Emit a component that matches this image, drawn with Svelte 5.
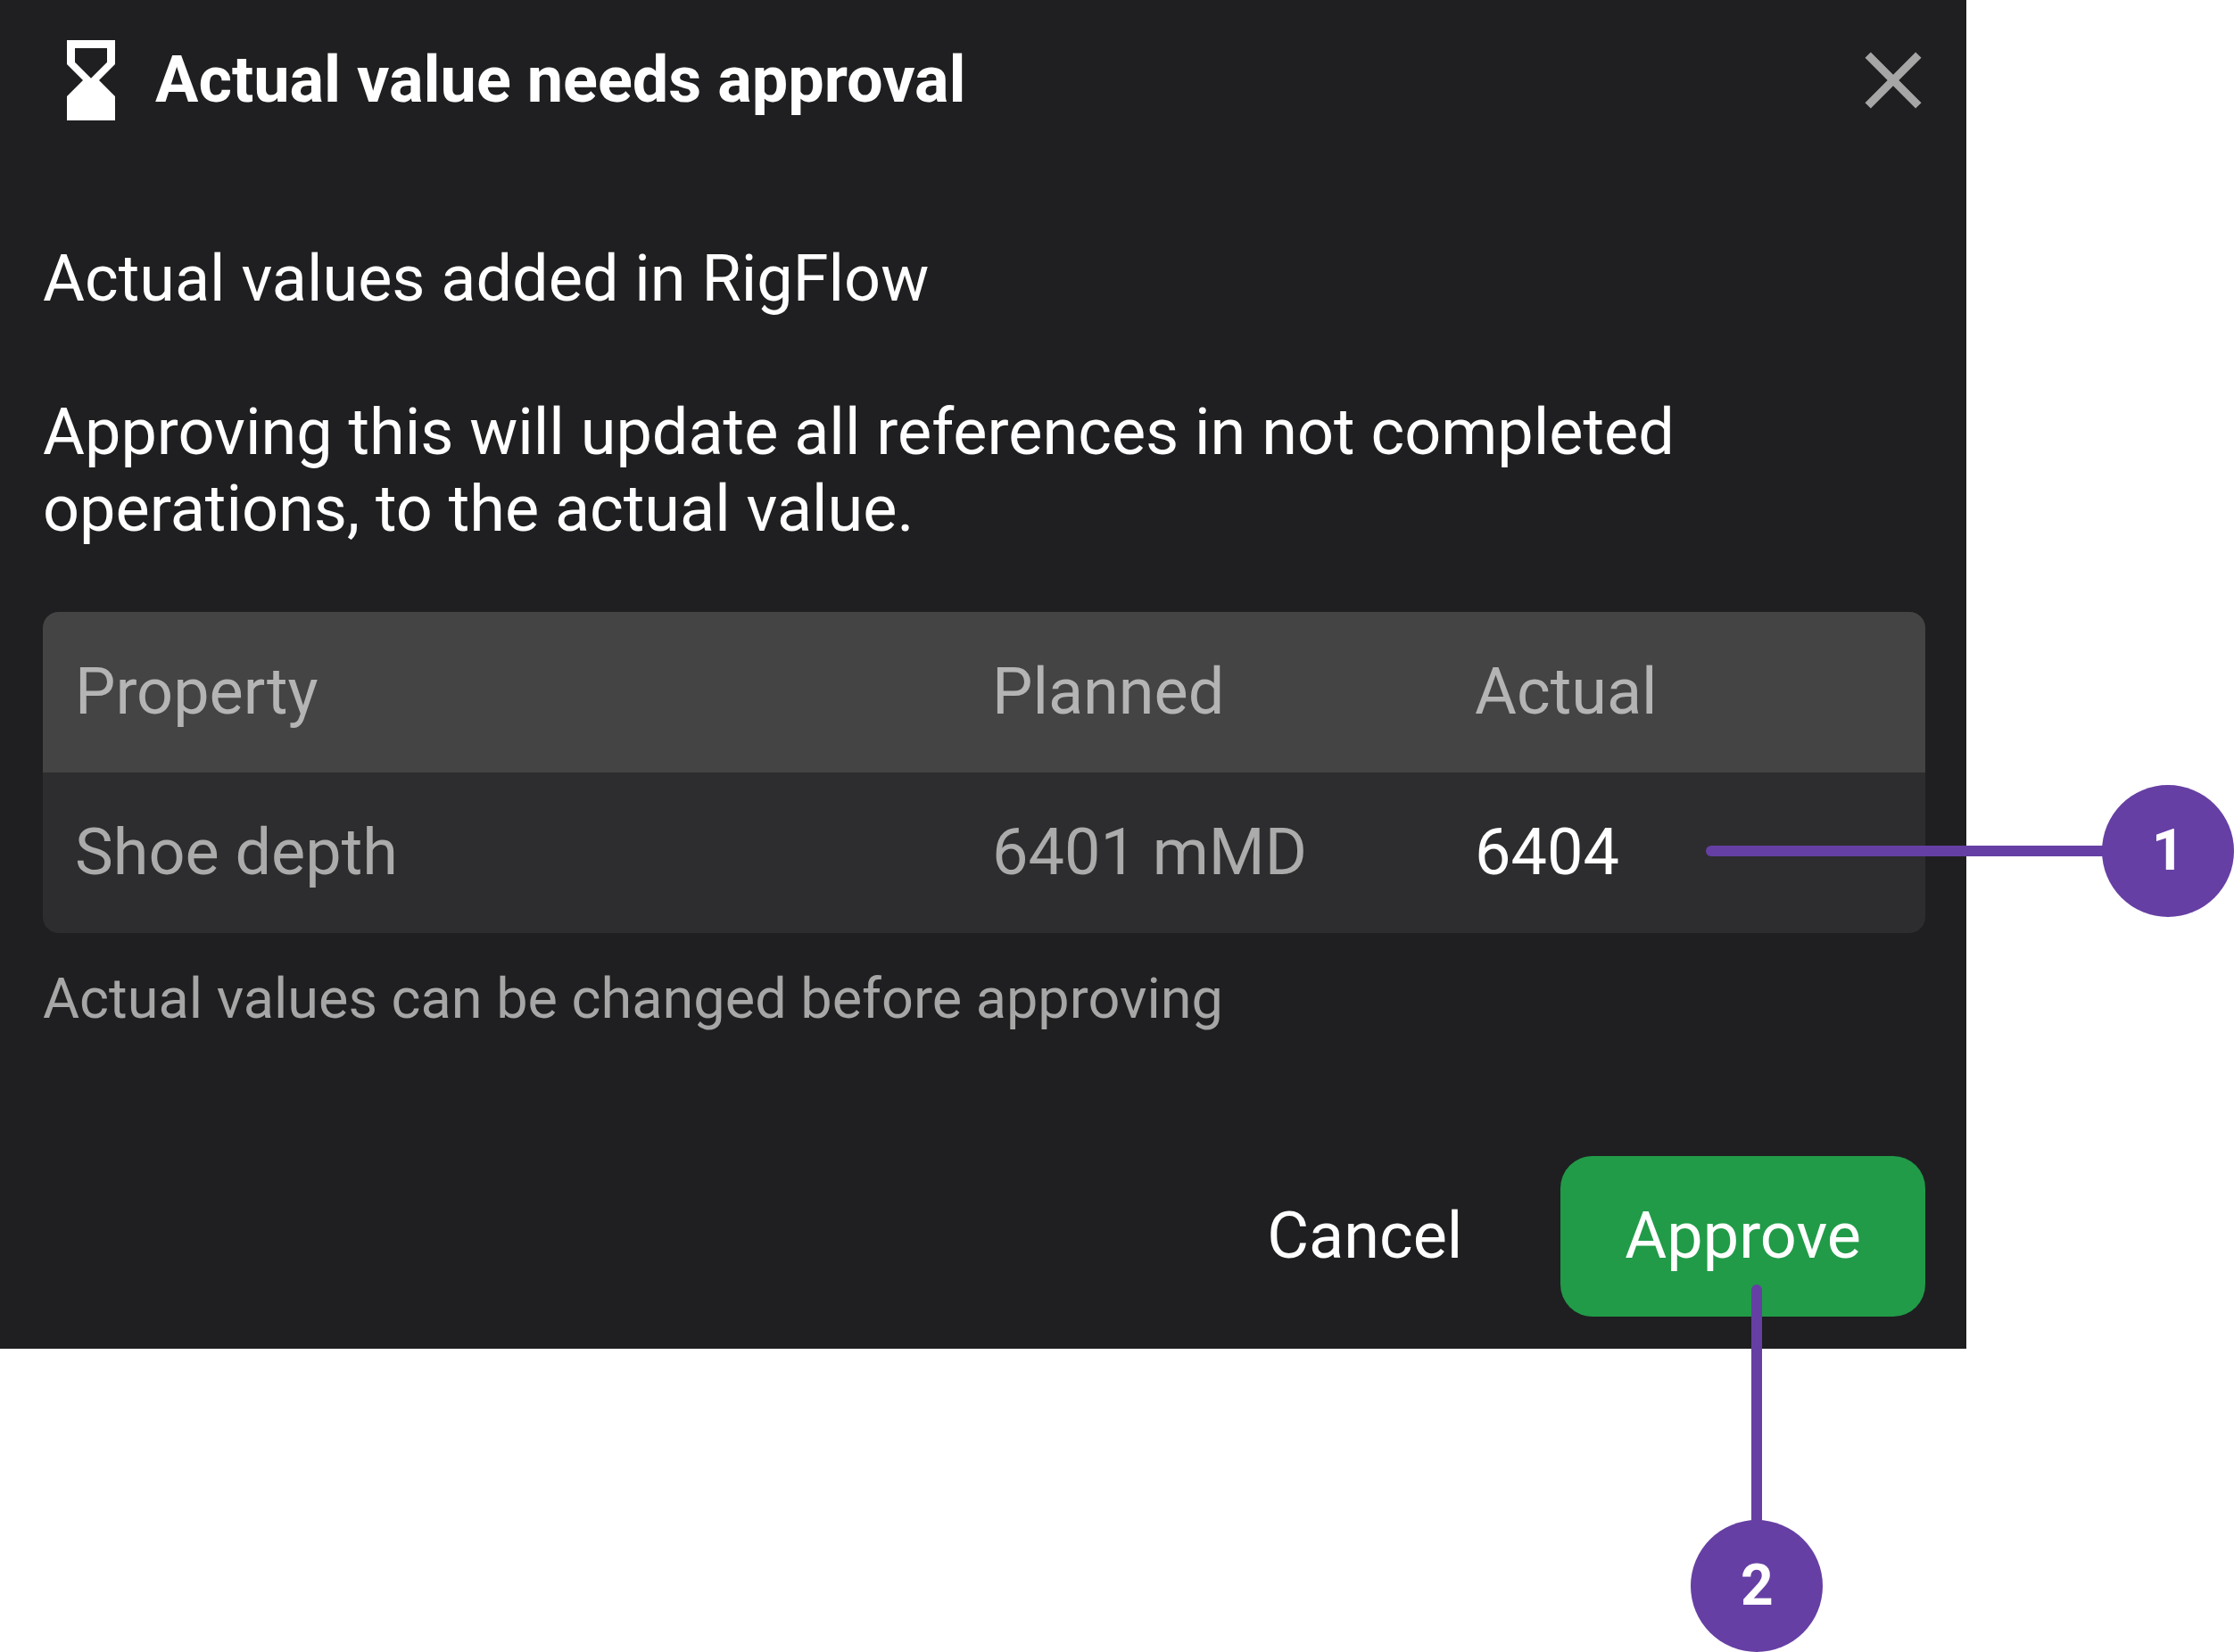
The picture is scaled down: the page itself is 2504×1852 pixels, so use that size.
<script>
	export let onClose = () => {};
	export let onApprove = () => {};

	let rows = [{ id: 'shoe-depth', property: 'Shoe depth', planned: '6401 mMD', actual: '6404' }];

	function handleSubmit(e) {
		e.preventDefault();
		onApprove(rows);
	}
</script>

<main>
	<form class="dialog" on:submit={handleSubmit}>
		<header>
			<svg class="icon" viewBox="0 0 24 24" aria-hidden="true">
				<path
					d="M18 22l-.01-6L14 12l3.99-4.01L18 2H6v6l4 4-4 3.99V22h12zM8 7.5V4h8v3.5l-4 4-4-4z"
				/>
			</svg>
			<h1>Actual value needs approval</h1>
			<button class="closeBtn" type="button" aria-label="Close" on:click={onClose}>
				<svg class="icon" viewBox="0 0 24 24">
					<path
						d="M19 6.41L17.59 5 12 10.59 6.41 5 5 6.41 10.59 12 5 17.59 6.41 19 12 13.41 17.59 19 19 17.59 13.41 12z"
					/>
				</svg>
			</button>
		</header>

		<div class="intro">
			<p>Actual values added in RigFlow</p>
			<p>
				Approving this will update all references in not completed operations, to the actual value.
			</p>
		</div>

		<div class="values">
			<table>
				<thead>
					<tr>
						<th class="property">Property</th>
						<th>Planned</th>
						<th>Actual</th>
					</tr>
				</thead>
				<tbody>
					{#each rows as row (row.id)}
						<tr>
							<td>{row.property}</td>
							<td>{row.planned}</td>
							<td>
								<input
									type="text"
									name={row.id}
									aria-label="Actual {row.property}"
									bind:value={row.actual}
								/>
							</td>
						</tr>
					{/each}
				</tbody>
			</table>
			<div class="callout toValue">
				<span class="line"></span>
				<span class="number">1</span>
			</div>
		</div>
		<p class="note">Actual values can be changed before approving</p>

		<footer>
			<button class="btn" type="button" on:click={onClose}>Cancel</button>
			<div class="approve">
				<button class="btn primary" type="submit">Approve</button>
				<div class="callout toApprove">
					<span class="line"></span>
					<span class="number">2</span>
				</div>
			</div>
		</footer>
	</form>
</main>

<style>
	:global(body) {
		background: #fff;
	}
	/* room on the right and below for the callouts */
	main {
		padding: 0 300px 340px 0;
		font-family: Roboto, sans-serif;
		font-size: 72px;
		line-height: 86px;
		color: #fff;
	}
	.dialog {
		display: flex;
		flex-direction: column;
		padding: 36px 46px 36px 48px;
		background: #1f1f21;
	}
	header {
		display: flex;
		align-items: center;
		gap: 18px;
	}
	h1 {
		flex: 1;
		margin: 0;
		font-size: 72px;
		font-weight: 700;
	}
	p {
		margin: 0;
	}
	.icon {
		display: block;
		width: 108px;
		height: 108px;
		fill: currentColor;
	}
	.closeBtn {
		margin-right: -18px;
		padding: 0;
		border: none;
		background: none;
		color: #a6a6a6;
		cursor: pointer;
	}
	.intro {
		display: flex;
		flex-direction: column;
		gap: 86px;
		margin: 126px 0 72px;
	}
	.values {
		position: relative;
	}
	table {
		width: 100%;
		table-layout: fixed;
		border-collapse: collapse;
		border-radius: 18px;
		overflow: hidden;
		background: #2d2d2f;
		color: #ababab;
	}
	thead {
		background: #444;
		color: #b4b4b4;
	}
	th,
	td {
		height: 180px;
		padding: 0 36px;
		text-align: left;
		font-weight: 400;
	}
	.property {
		width: 956px;
	}
	input {
		display: block;
		width: 100%;
		padding: 0;
		border: none;
		outline: none;
		background: none;
		color: #fff;
		font: inherit;
	}
	.note {
		margin-top: 36px;
		font-size: 63px;
		line-height: 76px;
		color: #a6a6a6;
	}
	footer {
		display: flex;
		justify-content: flex-end;
		gap: 38px;
		margin-top: 138px;
	}
	.approve {
		position: relative;
	}
	.btn {
		height: 180px;
		padding: 0 72px;
		border: none;
		border-radius: 36px;
		background: none;
		color: #fff;
		font: inherit;
		cursor: pointer;
	}
	.primary {
		background: #219b48;
	}
	.callout {
		position: absolute;
		display: flex;
		pointer-events: none;
	}
	.number {
		display: flex;
		align-items: center;
		justify-content: center;
		width: 148px;
		height: 148px;
		border-radius: 50%;
		background: #663fa4;
		font-size: 64px;
		font-weight: 700;
	}
	.line {
		background: #663fa4;
	}
	.toValue {
		right: -346px;
		bottom: 18px;
		align-items: center;
	}
	.toValue .line {
		width: 450px;
		height: 12px;
		margin-right: -6px;
		border-radius: 6px 0 0 6px;
	}
	.toApprove {
		top: 144px;
		left: 146px;
		flex-direction: column;
		align-items: center;
	}
	.toApprove .line {
		width: 12px;
		height: 270px;
		margin-bottom: -6px;
		border-radius: 6px 6px 0 0;
	}
</style>
